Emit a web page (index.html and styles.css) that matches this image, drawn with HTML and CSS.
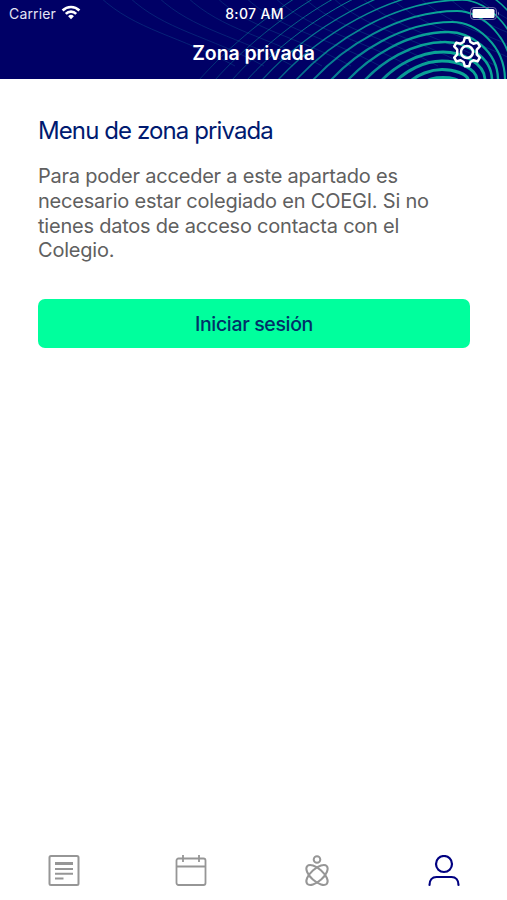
FILE: index.html
```html
<!DOCTYPE html>
<html lang="es">
<head>
    <meta charset="UTF-8">
    <meta name="viewport" content="width=device-width, initial-scale=1.0">
    <title>Zona privada</title>
    <link rel="stylesheet" href="styles.css">
</head>
<body>
    <div class="app">
        <header class="header">
            <svg class="waves" width="507" height="79" viewBox="0 0 507 79" fill="none">
                <defs>
                    <linearGradient id="fade" gradientUnits="userSpaceOnUse" x1="190" y1="0" x2="440" y2="0">
                        <stop offset="0" stop-color="#088c95" stop-opacity=".3"/>
                        <stop offset=".5" stop-color="#08969a" stop-opacity=".8"/>
                        <stop offset="1" stop-color="#0aa596"/>
                    </linearGradient>
                </defs>
                <g id="lines" stroke="#176a9c" stroke-width=".8" opacity=".4"></g>
                <g id="rings" stroke="url(#fade)"></g>
                <ellipse cx="443" cy="81" rx="17" ry="5" fill="#0aa596"/>
            </svg>
            <div class="status">
                <div class="carrier">
                    <span>Carrier</span>
                    <svg width="20" height="15" viewBox="0 0 20 15" fill="none" stroke="#fff" stroke-width="2.6">
                        <path d="M1.6 5.5a12 12 0 0 1 16.8 0M4.8 8.8a7.4 7.4 0 0 1 10.4 0"/>
                        <path d="M10 14.2 7.1 11.3a4.1 4.1 0 0 1 5.8 0z" fill="#fff" stroke="none"/>
                    </svg>
                </div>
                <span class="time">8:07 AM</span>
                <svg class="battery" width="30" height="13" viewBox="0 0 30 13">
                    <rect x=".5" y=".5" width="26" height="12" rx="3.5" fill="none" stroke="#6a6aa8"/>
                    <rect x="2.5" y="2" width="22" height="9" rx="1.5" fill="#fff"/>
                    <path d="M28 4.5q2 2 0 4z" fill="#8585b8"/>
                </svg>
            </div>
            <div class="navbar">
                <h1 class="title">Zona privada</h1>
                <svg class="gear" width="32" height="32" viewBox="0 0 32 32" fill="none" stroke="#fff" stroke-width="2.5" stroke-linejoin="round">
                    <path d="M13.8 1.800h4.400l1.200 4.200 3 1.700 4.200-1.100 2.200 3.800-3 3.200v4.800l3 3.200-2.200 3.800-4.200-1.100-3 1.700-1.200 4.200h-4.400l-1.200-4.200-3-1.700-4.200 1.100-2.200-3.800 3-3.200v-4.800l-3-3.200 2.200-3.800 4.200 1.100 3-1.700z"/>
                    <circle cx="16" cy="16" r="6"/>
                </svg>
            </div>
        </header>

        <main class="content">
            <h2 class="heading">Menu de zona privada</h2>
            <p class="text">Para poder acceder a este apartado es<br>necesario estar colegiado en COEGI. Si no<br>tienes datos de acceso contacta con el<br>Colegio.</p>
            <button class="login">Iniciar sesión</button>
        </main>

        <nav class="tabs">
            <a class="tab">
                <svg width="32" height="32" viewBox="0 0 32 32" fill="none" stroke="currentColor" stroke-width="2">
                    <rect x="1.5" y="1" width="29" height="29" rx="1.5"/>
                    <path d="M7 8.500h18" stroke-width="3"/>
                    <path d="M7 14h18M7 18.800h18M7 23.500h8.500"/>
                </svg>
            </a>
            <a class="tab">
                <svg width="32" height="32" viewBox="0 0 32 32" fill="none" stroke="currentColor" stroke-width="1.8">
                    <rect x="1.5" y="3.5" width="29" height="26.5" rx="2"/>
                    <path d="M1.5 11.5h29M8 0v7M24 0v7"/>
                </svg>
            </a>
            <a class="tab">
                <svg width="32" height="32" viewBox="0 0 32 32" fill="none" stroke="currentColor" stroke-width="2">
                    <circle cx="16" cy="4.5" r="3.3"/>
                    <ellipse cx="16" cy="20" rx="13.2" ry="6.2" transform="rotate(42 16 20)"/>
                    <ellipse cx="16" cy="20" rx="13.2" ry="6.2" transform="rotate(-42 16 20)"/>
                </svg>
            </a>
            <a class="tab active">
                <svg width="32" height="32" viewBox="0 0 32 32" fill="none" stroke="currentColor" stroke-width="2.2" stroke-linecap="round">
                    <circle cx="16" cy="9" r="8"/>
                    <path d="M1.5 30c0-5 2.7-8 7-8h15c4.3 0 7 3 7 8"/>
                </svg>
            </a>
        </nav>
    </div>

    <script>
        // left x, top x, top y, right x of every ring where it meets the bottom edge
        let rings = [
            [412, 442, 69.5, 468], [397, 442, 61, 477], [382, 443, 52, 485],
            [365, 445, 42, 492], [348, 448, 32, 498], [331, 452, 22, 505],
            [313, 457, 11, 513], [296, 462, 0, 522], [278, 467, -11, 532],
            [262, 472, -22, 542], [247, 477, -33, 552], [232, 482, -44, 562],
            [215, 487, -55, 572], [199, 492, -66, 582]
        ];
        let html = '';
        rings.forEach(function([l, x, y, r], i) {
            let h = 80 - y;
            let w = x - l;
            let v = r - x;
            let d = `M${l} 80C${l + w * 0.2} ${80 - h * 0.45} ${x - w * 0.42} ${y} ${x} ${y}C${x + v * 0.45} ${y} ${r} ${80 - h * 0.6} ${r} 80`;
            html += `<path d="${d}" stroke-width="${Math.max(0.9, 3.2 - i * 0.22)}"/>`;
        });
        document.getElementById('rings').innerHTML = html;

        let lines = '';
        for (let x = 100; x < 480; x += 29) {
            lines += `<path d="M${x} -3C${x + 35} 30 ${x + 80} 36 ${x + 135} 66"/>`;
        }
        document.getElementById('lines').innerHTML = lines;
    </script>
</body>
</html>
```
FILE: styles.css
```css
* {
    box-sizing: border-box;
}
body {
    margin: 0;
    font-family: Inter, "Liberation Sans", sans-serif;
    background-color: #fff;
}
.app {
    display: flex;
    flex-direction: column;
    height: 900px;
}
.header {
    position: relative;
    height: 79px;
    background-color: #000066;
    color: #fff;
    overflow: hidden;
}
.waves {
    position: absolute;
    top: 0;
    left: 0;
}
.status {
    position: relative;
    display: grid;
    grid-template-columns: 1fr auto 1fr;
    align-items: center;
    height: 27px;
    padding: 0 7px 0 9px;
    font-size: 14px;
    letter-spacing: 0.15px;
}
.carrier {
    display: flex;
    align-items: center;
    gap: 5px;
    color: #e4e4f4;
}
.carrier svg {
    margin-top: -2px;
}
.time {
    font-weight: 500;
    letter-spacing: 0.35px;
}
.battery {
    justify-self: end;
}
.navbar {
    position: relative;
    display: grid;
    grid-template-columns: 1fr auto 1fr;
    align-items: center;
    height: 50px;
    padding: 0 24px;
}
.title {
    grid-column: 2;
    margin: 2px 0 0;
    font-size: 19.5px;
    font-weight: 600;
    letter-spacing: -0.1px;
}
.gear {
    justify-self: end;
}
.content {
    flex: 1;
    padding: 37px 37px 0 38px;
}
.heading {
    margin: 0;
    font-size: 24px;
    line-height: 30px;
    font-weight: 400;
    letter-spacing: -0.9px;
    color: #001a70;
}
.text {
    margin: 18px 0 0;
    font-size: 20px;
    line-height: 24.8px;
    letter-spacing: -0.22px;
    color: #606060;
    white-space: nowrap;
}
.login {
    display: block;
    width: 100%;
    height: 49px;
    margin-top: 36px;
    padding: 0;
    border: none;
    border-radius: 7px;
    background-color: #00ff9d;
    color: #003068;
    font-family: inherit;
    font-size: 19.5px;
    font-weight: 500;
    letter-spacing: -0.35px;
}
.tabs {
    display: grid;
    grid-template-columns: repeat(4, 1fr);
    height: 60px;
    padding: 15px 0 0 1px;
}
.tab {
    display: flex;
    justify-content: center;
    color: #969696;
}
.active {
    color: #000080;
}
```
